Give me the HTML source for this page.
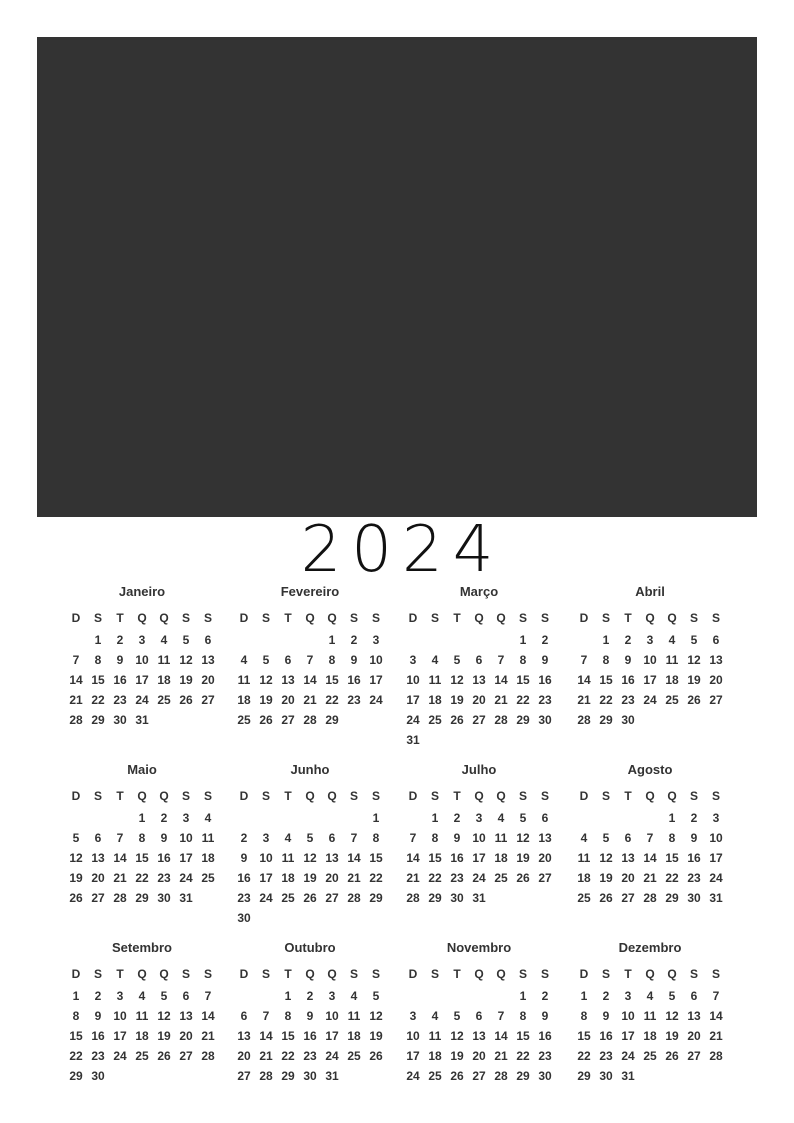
<!DOCTYPE html>
<html><head><meta charset="utf-8"><style>
body{margin:0;width:794px;height:1123px;background:#fff;position:relative;overflow:hidden;font-family:"Liberation Sans",Arial,sans-serif;color:#333}
.ph{position:absolute;left:37px;top:37px;width:720px;height:480px;background:#333}
.yr{position:absolute;left:0;width:794px;top:510px;text-align:center;font-family:"DejaVu Sans",sans-serif;font-size:64px;font-weight:200;color:#111;letter-spacing:10px;padding-left:10px;box-sizing:border-box;line-height:80px}
.m{position:absolute;width:154px}
.t{height:20px;line-height:20px;text-align:center;font-weight:bold;font-size:13px;margin-bottom:6px}
.g{display:grid;grid-template-columns:repeat(7,22px);grid-auto-rows:20px;line-height:20px;text-align:center;font-weight:bold;font-size:12px}
.h{margin-bottom:2px}
</style></head><body>
<div class="ph"></div>
<div class="yr">2024</div>

<div class="m" style="left:65px;top:582px"><div class="t">Janeiro</div><div class="g h"><span>D</span><span>S</span><span>T</span><span>Q</span><span>Q</span><span>S</span><span>S</span></div><div class="g"><span></span><span>1</span><span>2</span><span>3</span><span>4</span><span>5</span><span>6</span><span>7</span><span>8</span><span>9</span><span>10</span><span>11</span><span>12</span><span>13</span><span>14</span><span>15</span><span>16</span><span>17</span><span>18</span><span>19</span><span>20</span><span>21</span><span>22</span><span>23</span><span>24</span><span>25</span><span>26</span><span>27</span><span>28</span><span>29</span><span>30</span><span>31</span></div></div>

<div class="m" style="left:233px;top:582px"><div class="t">Fevereiro</div><div class="g h"><span>D</span><span>S</span><span>T</span><span>Q</span><span>Q</span><span>S</span><span>S</span></div><div class="g"><span></span><span></span><span></span><span></span><span>1</span><span>2</span><span>3</span><span>4</span><span>5</span><span>6</span><span>7</span><span>8</span><span>9</span><span>10</span><span>11</span><span>12</span><span>13</span><span>14</span><span>15</span><span>16</span><span>17</span><span>18</span><span>19</span><span>20</span><span>21</span><span>22</span><span>23</span><span>24</span><span>25</span><span>26</span><span>27</span><span>28</span><span>29</span></div></div>

<div class="m" style="left:402px;top:582px"><div class="t">Março</div><div class="g h"><span>D</span><span>S</span><span>T</span><span>Q</span><span>Q</span><span>S</span><span>S</span></div><div class="g"><span></span><span></span><span></span><span></span><span></span><span>1</span><span>2</span><span>3</span><span>4</span><span>5</span><span>6</span><span>7</span><span>8</span><span>9</span><span>10</span><span>11</span><span>12</span><span>13</span><span>14</span><span>15</span><span>16</span><span>17</span><span>18</span><span>19</span><span>20</span><span>21</span><span>22</span><span>23</span><span>24</span><span>25</span><span>26</span><span>27</span><span>28</span><span>29</span><span>30</span><span>31</span></div></div>

<div class="m" style="left:573px;top:582px"><div class="t">Abril</div><div class="g h"><span>D</span><span>S</span><span>T</span><span>Q</span><span>Q</span><span>S</span><span>S</span></div><div class="g"><span></span><span>1</span><span>2</span><span>3</span><span>4</span><span>5</span><span>6</span><span>7</span><span>8</span><span>9</span><span>10</span><span>11</span><span>12</span><span>13</span><span>14</span><span>15</span><span>16</span><span>17</span><span>18</span><span>19</span><span>20</span><span>21</span><span>22</span><span>23</span><span>24</span><span>25</span><span>26</span><span>27</span><span>28</span><span>29</span><span>30</span></div></div>

<div class="m" style="left:65px;top:760px"><div class="t">Maio</div><div class="g h"><span>D</span><span>S</span><span>T</span><span>Q</span><span>Q</span><span>S</span><span>S</span></div><div class="g"><span></span><span></span><span></span><span>1</span><span>2</span><span>3</span><span>4</span><span>5</span><span>6</span><span>7</span><span>8</span><span>9</span><span>10</span><span>11</span><span>12</span><span>13</span><span>14</span><span>15</span><span>16</span><span>17</span><span>18</span><span>19</span><span>20</span><span>21</span><span>22</span><span>23</span><span>24</span><span>25</span><span>26</span><span>27</span><span>28</span><span>29</span><span>30</span><span>31</span></div></div>

<div class="m" style="left:233px;top:760px"><div class="t">Junho</div><div class="g h"><span>D</span><span>S</span><span>T</span><span>Q</span><span>Q</span><span>S</span><span>S</span></div><div class="g"><span></span><span></span><span></span><span></span><span></span><span></span><span>1</span><span>2</span><span>3</span><span>4</span><span>5</span><span>6</span><span>7</span><span>8</span><span>9</span><span>10</span><span>11</span><span>12</span><span>13</span><span>14</span><span>15</span><span>16</span><span>17</span><span>18</span><span>19</span><span>20</span><span>21</span><span>22</span><span>23</span><span>24</span><span>25</span><span>26</span><span>27</span><span>28</span><span>29</span><span>30</span></div></div>

<div class="m" style="left:402px;top:760px"><div class="t">Julho</div><div class="g h"><span>D</span><span>S</span><span>T</span><span>Q</span><span>Q</span><span>S</span><span>S</span></div><div class="g"><span></span><span>1</span><span>2</span><span>3</span><span>4</span><span>5</span><span>6</span><span>7</span><span>8</span><span>9</span><span>10</span><span>11</span><span>12</span><span>13</span><span>14</span><span>15</span><span>16</span><span>17</span><span>18</span><span>19</span><span>20</span><span>21</span><span>22</span><span>23</span><span>24</span><span>25</span><span>26</span><span>27</span><span>28</span><span>29</span><span>30</span><span>31</span></div></div>

<div class="m" style="left:573px;top:760px"><div class="t">Agosto</div><div class="g h"><span>D</span><span>S</span><span>T</span><span>Q</span><span>Q</span><span>S</span><span>S</span></div><div class="g"><span></span><span></span><span></span><span></span><span>1</span><span>2</span><span>3</span><span>4</span><span>5</span><span>6</span><span>7</span><span>8</span><span>9</span><span>10</span><span>11</span><span>12</span><span>13</span><span>14</span><span>15</span><span>16</span><span>17</span><span>18</span><span>19</span><span>20</span><span>21</span><span>22</span><span>23</span><span>24</span><span>25</span><span>26</span><span>27</span><span>28</span><span>29</span><span>30</span><span>31</span></div></div>

<div class="m" style="left:65px;top:938px"><div class="t">Setembro</div><div class="g h"><span>D</span><span>S</span><span>T</span><span>Q</span><span>Q</span><span>S</span><span>S</span></div><div class="g"><span>1</span><span>2</span><span>3</span><span>4</span><span>5</span><span>6</span><span>7</span><span>8</span><span>9</span><span>10</span><span>11</span><span>12</span><span>13</span><span>14</span><span>15</span><span>16</span><span>17</span><span>18</span><span>19</span><span>20</span><span>21</span><span>22</span><span>23</span><span>24</span><span>25</span><span>26</span><span>27</span><span>28</span><span>29</span><span>30</span></div></div>

<div class="m" style="left:233px;top:938px"><div class="t">Outubro</div><div class="g h"><span>D</span><span>S</span><span>T</span><span>Q</span><span>Q</span><span>S</span><span>S</span></div><div class="g"><span></span><span></span><span>1</span><span>2</span><span>3</span><span>4</span><span>5</span><span>6</span><span>7</span><span>8</span><span>9</span><span>10</span><span>11</span><span>12</span><span>13</span><span>14</span><span>15</span><span>16</span><span>17</span><span>18</span><span>19</span><span>20</span><span>21</span><span>22</span><span>23</span><span>24</span><span>25</span><span>26</span><span>27</span><span>28</span><span>29</span><span>30</span><span>31</span></div></div>

<div class="m" style="left:402px;top:938px"><div class="t">Novembro</div><div class="g h"><span>D</span><span>S</span><span>T</span><span>Q</span><span>Q</span><span>S</span><span>S</span></div><div class="g"><span></span><span></span><span></span><span></span><span></span><span>1</span><span>2</span><span>3</span><span>4</span><span>5</span><span>6</span><span>7</span><span>8</span><span>9</span><span>10</span><span>11</span><span>12</span><span>13</span><span>14</span><span>15</span><span>16</span><span>17</span><span>18</span><span>19</span><span>20</span><span>21</span><span>22</span><span>23</span><span>24</span><span>25</span><span>26</span><span>27</span><span>28</span><span>29</span><span>30</span></div></div>

<div class="m" style="left:573px;top:938px"><div class="t">Dezembro</div><div class="g h"><span>D</span><span>S</span><span>T</span><span>Q</span><span>Q</span><span>S</span><span>S</span></div><div class="g"><span>1</span><span>2</span><span>3</span><span>4</span><span>5</span><span>6</span><span>7</span><span>8</span><span>9</span><span>10</span><span>11</span><span>12</span><span>13</span><span>14</span><span>15</span><span>16</span><span>17</span><span>18</span><span>19</span><span>20</span><span>21</span><span>22</span><span>23</span><span>24</span><span>25</span><span>26</span><span>27</span><span>28</span><span>29</span><span>30</span><span>31</span></div></div>
</body></html>
